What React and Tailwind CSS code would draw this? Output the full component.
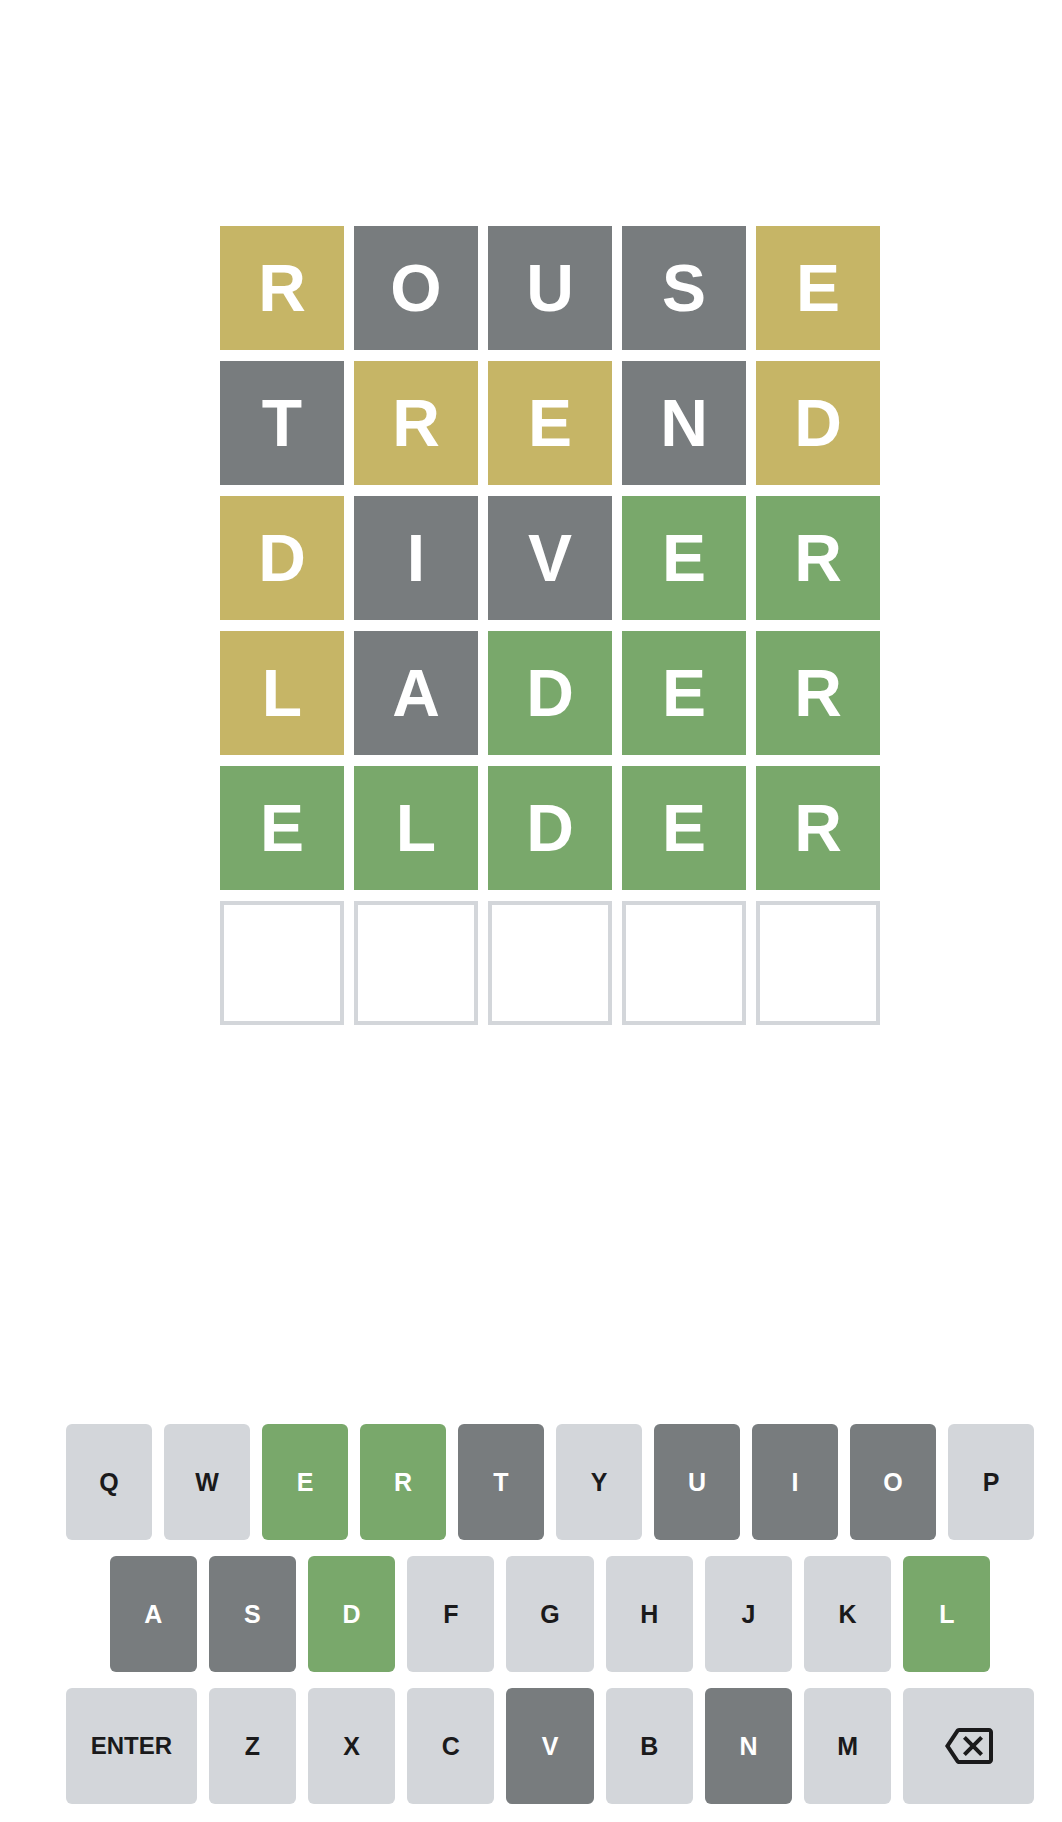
import React from "react";

const TILE_COLORS = {
  g: "bg-[#787c7e]",
  y: "bg-[#c6b566]",
  G: "bg-[#79a86b]",
};

// word + per-letter state: g = absent, y = present, G = correct, e = empty
const BOARD = [
  ["ROUSE", "ygggy"],
  ["TREND", "gyygy"],
  ["DIVER", "yggGG"],
  ["LADER", "ygGGG"],
  ["ELDER", "GGGGG"],
  ["     ", "eeeee"],
];

const KEY_COLORS = {
  l: "bg-[#d3d6da] text-[#1a1a1b]",
  g: "bg-[#787c7e] text-white",
  G: "bg-[#79a86b] text-white",
};

const KEY_ROWS = [
  [
    ["Q", "l"],
    ["W", "l"],
    ["E", "G"],
    ["R", "G"],
    ["T", "g"],
    ["Y", "l"],
    ["U", "g"],
    ["I", "g"],
    ["O", "g"],
    ["P", "l"],
  ],
  [
    ["A", "g"],
    ["S", "g"],
    ["D", "G"],
    ["F", "l"],
    ["G", "l"],
    ["H", "l"],
    ["J", "l"],
    ["K", "l"],
    ["L", "G"],
  ],
  [
    ["ENTER", "l"],
    ["Z", "l"],
    ["X", "l"],
    ["C", "l"],
    ["V", "g"],
    ["B", "l"],
    ["N", "g"],
    ["M", "l"],
    ["BACK", "l"],
  ],
];

const BackspaceIcon = () => (
  <svg width="48" height="48" viewBox="0 0 24 24" fill="#1a1a1b">
    <path d="M22 3H7c-.69 0-1.23.35-1.59.88L0 12l5.41 8.11c.36.53.9.89 1.59.89h15c1.1 0 2-.9 2-2V5c0-1.1-.9-2-2-2zm0 16H7.07L2.4 12l4.66-7H22v14zm-11.59-2L14 13.41 17.59 17 19 15.59 15.41 12 19 8.41 17.59 7 14 10.59 10.41 7 9 8.41 12.59 12 9 15.59z" />
  </svg>
);

const Tile = ({ letter, state }) => {
  if (state === "e") {
    return <div className="w-[124px] h-[124px] border-4 border-[#d3d6da] bg-white" />;
  }
  return (
    <div
      className={`w-[124px] h-[124px] flex items-center justify-center text-white font-bold text-[66px] leading-none ${TILE_COLORS[state]}`}
    >
      {letter}
    </div>
  );
};

const Key = ({ label, state }) => {
  const wide = label === "ENTER" || label === "BACK";
  return (
    <button
      className={`h-[116px] rounded-[6px] flex items-center justify-center font-bold leading-none ${
        wide ? "flex-[1.5] text-[24px]" : "flex-1 text-[25px]"
      } ${KEY_COLORS[state]}`}
    >
      {label === "BACK" ? <BackspaceIcon /> : label}
    </button>
  );
};

export default function App() {
  return (
    <div
      className="w-[1062px] h-[1822px] bg-white pl-[38px] flex flex-col items-center"
      style={{ fontFamily: '"Liberation Sans", Arial, sans-serif' }}
    >
      <div className="mt-[226px] grid grid-cols-5 gap-x-[10px] gap-y-[11px] w-[660px]">
        {BOARD.map(([word, states], r) =>
          word
            .split("")
            .map((ch, c) => <Tile key={`${r}-${c}`} letter={ch} state={states[c]} />)
        )}
      </div>

      <div className="mt-[399px] w-[968px] flex flex-col gap-[16px]">
        {KEY_ROWS.map((row, i) => (
          <div key={i} className="flex gap-[12px]">
            {i === 1 && <div className="flex-[0.5] -mr-[12px]" />}
            {row.map(([label, state]) => (
              <Key key={label} label={label} state={state} />
            ))}
            {i === 1 && <div className="flex-[0.5] -ml-[12px]" />}
          </div>
        ))}
      </div>
    </div>
  );
}
